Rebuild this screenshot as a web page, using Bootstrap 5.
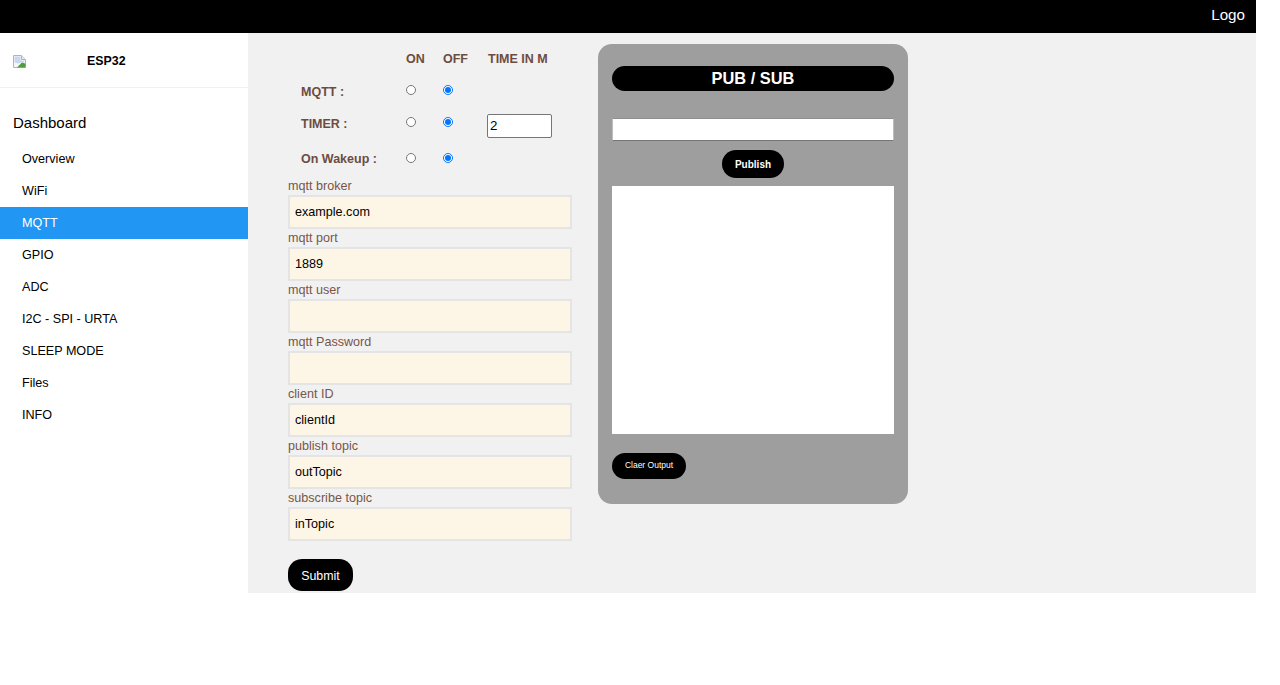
<!DOCTYPE html>
<html lang="en">
<head>
    <meta charset="UTF-8">
    <meta name="viewport" content="width=device-width, initial-scale=1.0">
    <title>ESP32</title>
    <link href="https://cdn.jsdelivr.net/npm/bootstrap@5.3.0/dist/css/bootstrap.min.css" rel="stylesheet">
    <style>
        body { font-family: "Liberation Sans", Arial, sans-serif; font-size: 12.6px; color: #000; background: #fff; }
        .page-wrap { width: 1256px; }
        /* top bar */
        .top-bar { height: 33px; background: #000; color: #fff; font-size: 15.2px; padding-right: 11px; padding-bottom: 3px; }
        /* sidebar */
        .side-bar { width: 248px; flex-shrink: 0; background: #fff; }
        .side-brand { height: 55px; padding: 3px 0 0 13px; border-bottom: 1px solid #f1f1f1; font-size: 12.4px; font-weight: 700; }
        .side-brand svg { width: 13px; height: 13px; }
        .side-brand span { margin-left: 61px; }
        .side-title { font-size: 15px; padding: 26px 0 0 13px; height: 55px; line-height: 18px; }
        .side-link { display: block; height: 32px; line-height: 33px; padding-left: 22px; color: #000; text-decoration: none; }
        .side-link.active-item { background: #2196f3; color: #fff; }
        /* main */
        .main-area { background: #f1f1f1; height: 560px; padding: 11px 0 0 40px; flex-grow: 1; gap: 26px; }
        .form-col { width: 284px; flex-shrink: 0; color: #795548; }
        .opt-grid { display: grid; grid-template-columns: 118px 37px 45px 1fr; grid-template-rows: 32px 30px 34px 37px; font-weight: 700; font-size: 12.5px; color: #6d4c41; }
        .opt-head { line-height: 30px; }
        .opt-row { align-items: center; }
        .opt-label { padding: 2px 0 0 13px; }
        .opt-grid input[type=radio] { width: 10px; height: 10px; margin: -2px 0 0 -0.5px; display: block; }
        .time-input { width: 65px; height: 24px; font-size: 13.33px; color: #000; padding: 0 2px 1px; border: 1px solid #767676; border-radius: 2px; margin: 8px 0 0 -1px; display: block; }
        .field-label { display: block; height: 18px; line-height: 18px; }
        .field-input { display: block; width: 284px; height: 34px; background: #fdf5e6; border: 2px solid #e4e4e4; padding: 0 5px; font-size: 12.6px; color: #000; border-radius: 0; outline: 0; }
        .black-btn { background: #000; color: #fff; border: 0; }
        .submit-btn { width: 65px; height: 32px; border-radius: 14px; font-size: 12.4px; margin-top: 18px; padding: 2px 0 0; display: block; }
        /* pub sub panel */
        .pub-panel { width: 310px; height: 460px; background: #9e9e9e; border-radius: 14px; padding: 22px 14px 0; flex-shrink: 0; }
        .pub-title { height: 25px; line-height: 25px; background: #000; color: #fff; border-radius: 13px; font-size: 16.4px; font-weight: 700; text-align: center; margin: 0; }
        .pub-input { display: block; width: 100%; height: 23px; margin-top: 27px; border: 1px solid #bdbdbd; border-top-color: #8f8f8f; border-bottom-color: #767676; border-radius: 0; background: #fff; padding: 0 2px; }
        .publish-btn { display: block; width: 62px; height: 28px; border-radius: 14px; font-size: 10px; font-weight: 700; margin: 9px auto 8px; padding: 0; }
        .pub-output { width: 100%; height: 248px; background: #fff; }
        .clear-btn { display: block; width: 74px; height: 26px; border-radius: 13px; font-size: 8.5px; margin-top: 19px; padding: 0 0 2px; }
    </style>
</head>
<body class="m-0">

<div class="page-wrap">
    <!-- top bar -->
    <div class="top-bar d-flex justify-content-end align-items-center">Logo</div>

    <div class="d-flex">
        <!-- sidebar -->
        <div class="side-bar">
            <div class="side-brand d-flex align-items-center">
                <svg viewBox="0 0 13 13" aria-hidden="true">
                    <path d="M.5.500h8l4 4v8H.500z" fill="#f4f6f8" stroke="#b4b4b4"/>
                    <path d="M8.500.500v4h4" fill="#e8e8e8" stroke="#b4b4b4"/>
                    <path d="M1.500 1.500h6v4h4v1l-3 1-3 1-4-1z" fill="#c9d8f0"/>
                    <path d="M4 12.500l5-5 2 .5 1.500 1v3.500z" fill="#4f9d3f"/>
                </svg>
                <span>ESP32</span>
            </div>
            <div class="side-title">Dashboard</div>
            <a class="side-link" href="#">Overview</a>
            <a class="side-link" href="#">WiFi</a>
            <a class="side-link active-item" href="#">MQTT</a>
            <a class="side-link" href="#">GPIO</a>
            <a class="side-link" href="#">ADC</a>
            <a class="side-link" href="#">I2C - SPI - URTA</a>
            <a class="side-link" href="#">SLEEP MODE</a>
            <a class="side-link" href="#">Files</a>
            <a class="side-link" href="#">INFO</a>
        </div>

        <!-- main -->
        <div class="main-area d-flex align-items-start">
            <form class="form-col" onsubmit="return false">
                <div class="opt-grid">
                    <div class="opt-head"></div>
                    <div class="opt-head">ON</div>
                    <div class="opt-head">OFF</div>
                    <div class="opt-head">TIME IN M</div>

                    <div class="opt-label opt-row d-flex">MQTT :</div>
                    <div class="opt-row d-flex"><input type="radio" name="mqtt"></div>
                    <div class="opt-row d-flex"><input type="radio" name="mqtt" checked></div>
                    <div class="opt-row"></div>

                    <div class="opt-label opt-row d-flex">TIMER :</div>
                    <div class="opt-row d-flex"><input type="radio" name="timer"></div>
                    <div class="opt-row d-flex"><input type="radio" name="timer" checked></div>
                    <div class="opt-row"><input class="time-input" type="number" value="2"></div>

                    <div class="opt-label opt-row d-flex">On Wakeup :</div>
                    <div class="opt-row d-flex"><input type="radio" name="wake"></div>
                    <div class="opt-row d-flex"><input type="radio" name="wake" checked></div>
                    <div class="opt-row"></div>
                </div>

                <label class="field-label">mqtt broker</label>
                <input class="field-input" type="text" value="example.com">
                <label class="field-label">mqtt port</label>
                <input class="field-input" type="text" value="1889">
                <label class="field-label">mqtt user</label>
                <input class="field-input" type="text">
                <label class="field-label">mqtt Password</label>
                <input class="field-input" type="password">
                <label class="field-label">client ID</label>
                <input class="field-input" type="text" value="clientId">
                <label class="field-label">publish topic</label>
                <input class="field-input" type="text" value="outTopic">
                <label class="field-label">subscribe topic</label>
                <input class="field-input" type="text" value="inTopic">

                <button class="black-btn submit-btn" type="submit">Submit</button>
            </form>

            <div class="pub-panel">
                <h5 class="pub-title">PUB / SUB</h5>
                <input class="pub-input" type="text">
                <button class="black-btn publish-btn" type="button">Publish</button>
                <div class="pub-output"></div>
                <button class="black-btn clear-btn" type="button">Claer Output</button>
            </div>
        </div>
    </div>
</div>

<script src="https://cdn.jsdelivr.net/npm/bootstrap@5.3.0/dist/js/bootstrap.bundle.min.js"></script>
</body>
</html>
